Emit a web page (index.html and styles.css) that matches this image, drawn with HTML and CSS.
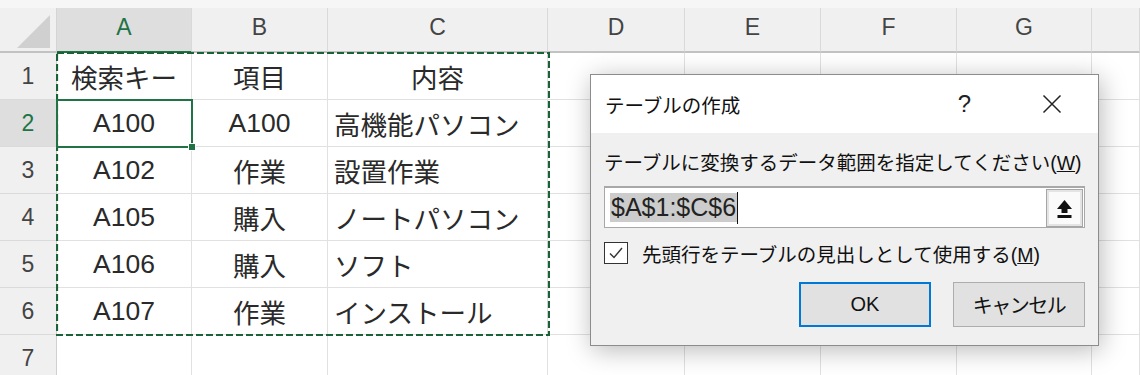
FILE: index.html
```html
<!DOCTYPE html>
<html lang="ja">
<head>
  <meta charset="UTF-8">
  <title>テーブルの作成</title>
  <link rel="stylesheet" href="styles.css">
</head>
<body>
  <div class="sheet">
    <div class="grid">
      <div class="corner"><span class="tri"></span></div>
      <div class="col-head sel">A</div>
      <div class="col-head">B</div>
      <div class="col-head">C</div>
      <div class="col-head">D</div>
      <div class="col-head">E</div>
      <div class="col-head">F</div>
      <div class="col-head">G</div>
      <div class="col-head"></div>

      <div class="row-head">1</div>
      <div class="cell center">検索キー</div>
      <div class="cell center">項目</div>
      <div class="cell center">内容</div>
      <div class="cell"></div><div class="cell"></div><div class="cell"></div><div class="cell"></div><div class="cell"></div>

      <div class="row-head sel">2</div>
      <div class="cell center">A100</div>
      <div class="cell center">A100</div>
      <div class="cell">高機能パソコン</div>
      <div class="cell"></div><div class="cell"></div><div class="cell"></div><div class="cell"></div><div class="cell"></div>

      <div class="row-head">3</div>
      <div class="cell center">A102</div>
      <div class="cell center">作業</div>
      <div class="cell">設置作業</div>
      <div class="cell"></div><div class="cell"></div><div class="cell"></div><div class="cell"></div><div class="cell"></div>

      <div class="row-head">4</div>
      <div class="cell center">A105</div>
      <div class="cell center">購入</div>
      <div class="cell">ノートパソコン</div>
      <div class="cell"></div><div class="cell"></div><div class="cell"></div><div class="cell"></div><div class="cell"></div>

      <div class="row-head">5</div>
      <div class="cell center">A106</div>
      <div class="cell center">購入</div>
      <div class="cell">ソフト</div>
      <div class="cell"></div><div class="cell"></div><div class="cell"></div><div class="cell"></div><div class="cell"></div>

      <div class="row-head">6</div>
      <div class="cell center">A107</div>
      <div class="cell center">作業</div>
      <div class="cell">インストール</div>
      <div class="cell"></div><div class="cell"></div><div class="cell"></div><div class="cell"></div><div class="cell"></div>

      <div class="row-head">7</div>
      <div class="cell"></div><div class="cell"></div><div class="cell"></div><div class="cell"></div><div class="cell"></div><div class="cell"></div><div class="cell"></div><div class="cell"></div>
    </div>

    <!-- コピー範囲の点線 -->
    <svg class="ants" width="494" height="284" viewBox="0 0 494 284">
      <rect x="1" y="1" width="492" height="282" fill="none" stroke="#1a6138" stroke-width="2.2" stroke-dasharray="7 3"/>
    </svg>
    <!-- アクティブセル -->
    <div class="active"><span class="handle"></span></div>

    <div class="dialog">
      <div class="dlg-title">
        <span class="dlg-name">テーブルの作成</span>
        <span class="help">?</span>
        <svg class="close" width="20" height="20" viewBox="0 0 20 20">
          <path d="M1.5 1.5 L18.5 18.5 M18.5 1.5 L1.5 18.5" stroke="#222" stroke-width="1.5" fill="none"/>
        </svg>
      </div>
      <div class="dlg-body">
        <div class="dlg-label">テーブルに変換するデータ範囲を指定してください(<u>W</u>)</div>
        <div class="range">
          <span class="range-text"><span class="hl">$A$1:$C$6</span><span class="caret"></span></span>
          <span class="collapse">
            <svg width="17" height="19" viewBox="0 0 17 19">
              <path d="M8.5 1 L1 10 L5.5 10 L5.5 14 L11.5 14 L11.5 10 L16 10 Z" fill="#111"/>
              <rect x="1.5" y="16" width="14" height="3" fill="#111"/>
            </svg>
          </span>
        </div>
        <div class="check">
          <span class="box">
            <svg width="22" height="20" viewBox="0 0 22 20">
              <path d="M5 10.5 L9 14.5 L17 5" stroke="#333" stroke-width="1.4" fill="none"/>
            </svg>
          </span>
          <span>先頭行をテーブルの見出しとして使用する(<u>M</u>)</span>
        </div>
        <div class="buttons">
          <span class="btn primary">OK</span>
          <span class="btn cancel">キャンセル</span>
        </div>
      </div>
    </div>
  </div>
</body>
</html>
```
FILE: styles.css
```css
/* 全体 */
body {
  margin: 0;
  font-family: "Liberation Sans", "Noto Sans CJK JP", sans-serif;
  background: #ffffff;
  overflow: hidden;
}

.sheet {
  position: relative;
  width: 1140px;
  height: 375px;
  overflow: hidden;
  padding-top: 8px;
  box-sizing: border-box;
  background: #f6f6f6;
}

/* シートのグリッド */
.grid {
  display: grid;
  grid-template-columns: 57px 135px 136px 220px 137px 136px 136px 135px 1fr;
  grid-template-rows: 45px repeat(7, 47px);
  background: #ffffff;
}

.corner {
  display: flex;
  justify-content: flex-end;
  align-items: flex-end;
  padding: 0 6px 3px 0;
  background: #f0f0f0;
  border-right: 1px solid #d4d4d4;
  border-bottom: 2px solid #c2c2c2;
}
.corner .tri {
  width: 33px;
  height: 33px;
  background: #d0d0d0;
  clip-path: polygon(100% 0, 100% 100%, 0 100%);
}

.col-head {
  display: flex;
  justify-content: center;
  padding-top: 6px;
  font-size: 23px;
  color: #444444;
  background: #f0f0f0;
  border-right: 1px solid #d9d9d9;
  border-bottom: 2px solid #c2c2c2;
}
.col-head.sel {
  background: #dedede;
  color: #217346;
  border-bottom-color: #217346;
}

.row-head {
  display: flex;
  justify-content: center;
  align-items: center;
  font-size: 23px;
  color: #444444;
  background: #f0f0f0;
  border-right: 1px solid #d0d0d0;
  border-bottom: 1px solid #dadada;
}
.row-head.sel {
  background: #dedede;
  color: #217346;
}

.cell {
  display: flex;
  align-items: center;
  padding-left: 6px;
  font-size: 26.5px;
  color: #2a2a2a;
  white-space: nowrap;
  border-right: 1px solid #e1e1e1;
  border-bottom: 1px solid #e1e1e1;
}
.cell.center {
  justify-content: center;
  padding-left: 0;
}

/* 選択範囲 */
.ants {
  position: absolute;
  left: 56px;
  top: 52px;
}
.active {
  position: absolute;
  left: 56px;
  top: 99px;
  width: 137px;
  height: 49px;
  box-sizing: border-box;
  border: 2px solid #217346;
}
.active .handle {
  position: absolute;
  right: -5px;
  bottom: -5px;
  width: 6px;
  height: 6px;
  background: #217346;
  border: 1px solid #ffffff;
}

/* ダイアログ */
.dialog {
  position: absolute;
  left: 590px;
  top: 74px;
  width: 509px;
  height: 272px;
  box-sizing: border-box;
  display: flex;
  flex-direction: column;
  background: #f0f0f0;
  border: 1px solid #8c8c8c;
  box-shadow: 2px 4px 24px rgba(0, 0, 0, 0.28);
}

.dlg-title {
  display: flex;
  align-items: center;
  height: 58px;
  padding: 0 36px 0 14px;
  background: #ffffff;
  font-size: 19.5px;
  color: #111111;
}
.dlg-name {
  flex: 1;
}
.help {
  font-size: 24px;
  margin-right: 71px;
  color: #222222;
}

.dlg-body {
  display: flex;
  flex-direction: column;
  padding: 18px 13px 0 13px;
  font-size: 19.5px;
  color: #111111;
}
.dlg-label {
  height: 24px;
  line-height: 24px;
  white-space: nowrap;
}

.range {
  display: flex;
  align-items: center;
  justify-content: space-between;
  height: 42px;
  margin-top: 11px;
  padding: 0 1px 0 5px;
  box-sizing: border-box;
  background: #ffffff;
  border: 1px solid #a8a8a8;
  border-top-width: 2px;
}
.range-text {
  display: flex;
  align-items: center;
  font-size: 25px;
}
.hl {
  background: #cccccc;
  color: #222222;
  line-height: 29px;
  padding: 0 1px;
}
.caret {
  width: 1px;
  height: 32px;
  background: #111111;
}
.collapse {
  display: flex;
  justify-content: center;
  align-items: center;
  width: 37px;
  height: 38px;
  box-sizing: border-box;
  padding-top: 2px;
  background: #fafafa;
  border: 1px solid #a6a6a6;
  box-shadow: inset 0 0 0 2px #e4e4e4;
}

.check {
  display: flex;
  align-items: center;
  gap: 14px;
  height: 24px;
  margin-top: 13px;
  white-space: nowrap;
}
.check .box {
  display: flex;
  width: 24px;
  height: 22px;
  box-sizing: border-box;
  justify-content: center;
  align-items: center;
  background: #ffffff;
  border: 1px solid #333333;
}

.buttons {
  display: flex;
  justify-content: flex-end;
  gap: 22px;
  margin-top: 17px;
}
.btn {
  display: flex;
  justify-content: center;
  align-items: center;
  width: 132px;
  height: 45px;
  box-sizing: border-box;
  background: #e1e1e1;
  border: 1px solid #adadad;
  font-size: 20px;
  color: #111111;
}
.btn.primary {
  border: 2px solid #0078d7;
}
.btn.cancel {
  letter-spacing: -1.5px;
}
```
